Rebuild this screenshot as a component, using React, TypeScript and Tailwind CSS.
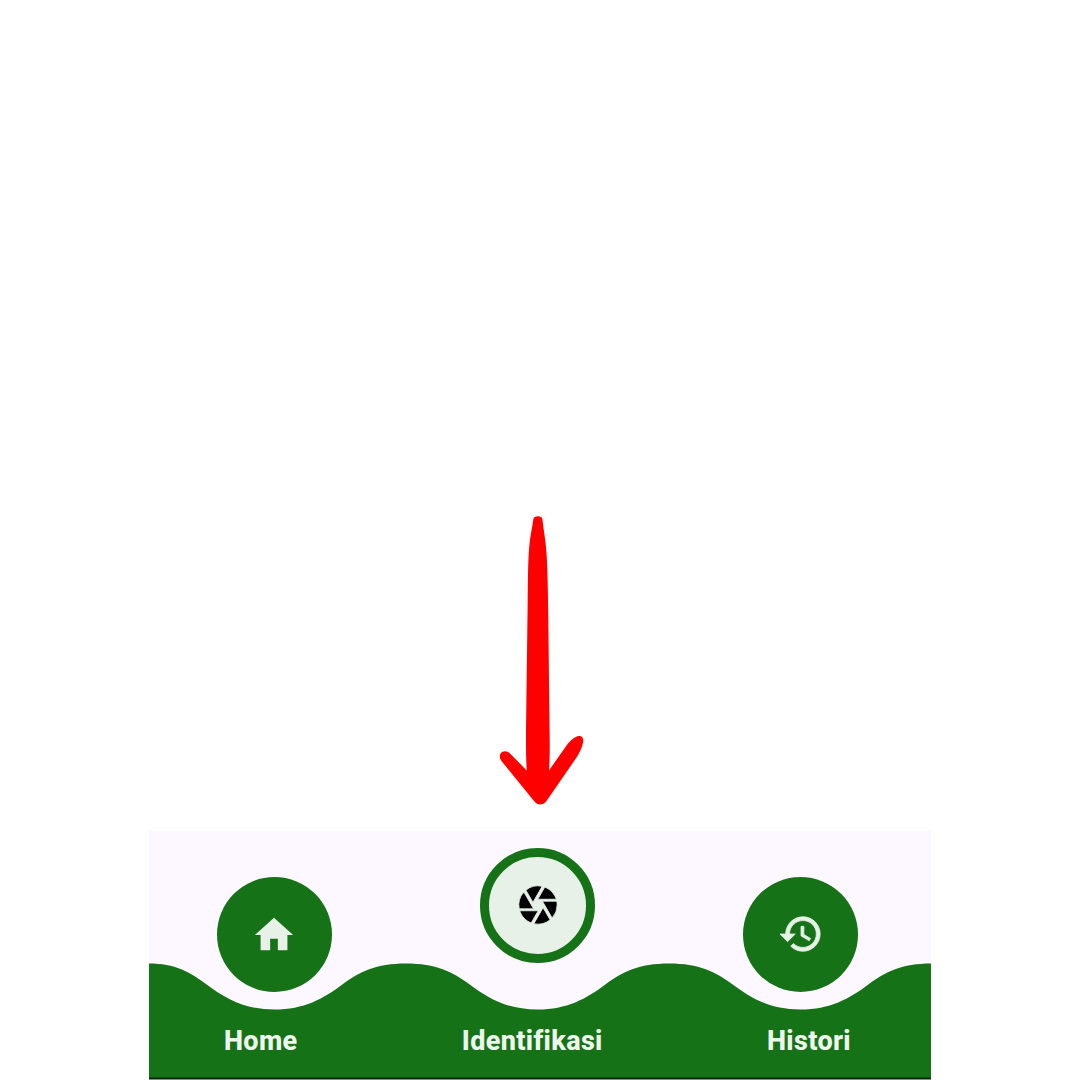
import type { ReactNode } from "react";
import { MdCamera, MdHistory, MdHome } from "react-icons/md";

function Arrow() {
  return (
    <svg
      width="84"
      height="290"
      viewBox="500 516 84 290"
      className="ml-[500px] mt-[516px] block shrink-0 fill-[#ff0000]"
      aria-hidden="true"
    >
      <path d="M538 516.2C535.3 516.2 533.8 517 533.4 519C532 529 530 537 529.2 547C528 562 528 578 527.7 600L526.4 700C526 730 525.6 752 526.7 770.5L510 753.4C507 750.2 502.5 750.8 500.6 753.6C499 756 499.5 758.5 501.5 761L534 801C537.5 805.8 543 805.8 546.5 801L576.5 757.5C580.5 751.5 583.3 744 583.3 740.5C583.2 736.5 580.5 735.2 577.5 736.3C573 738 569.5 741.5 566.5 745.5L549 770.5C550 757 549.8 742 549.5 725L548.2 610C547.9 590 547.6 570 546.5 553C545.5 539 543.6 530 542.4 519C542 517 540.5 516.2 538 516.2Z" />
    </svg>
  );
}

function Wave() {
  return (
    <svg
      width="782"
      height="249"
      viewBox="149 831 782 249"
      className="absolute inset-0"
      aria-hidden="true"
    >
      <path
        className="fill-[#167216]"
        d="M149 963.5C175 963.5 190 972 206 984C226 999 245 1009.5 274.5 1009.5C304 1009.5 323 999 343 984C359 972 376 963.5 406 963.5C436 963.5 453 972 469 984C489 999 508 1009.5 537.5 1009.5C567 1009.5 586 999 606 984C622 972 639 963.5 669 963.5C699 963.5 716 972 732 984C752 999 771 1009.5 800.5 1009.5C830 1009.5 849 999 869 984C885 972 902 963.5 931 963.5V1078H149Z"
      />
      <path className="fill-[#06280b]" d="M149 1077.5h782v2h-782z" />
    </svg>
  );
}

function NavCircle({ active = false, children }: { active?: boolean; children: ReactNode }) {
  return (
    <div
      className={
        active
          ? "flex size-[115px] items-center justify-center rounded-full border-[9px] border-[#167216] bg-[#e7f1e8] text-black"
          : "mt-[29px] flex size-[115px] items-center justify-center rounded-full bg-[#167216] text-[#e7f1e8]"
      }
    >
      {children}
    </div>
  );
}

export default function App() {
  return (
    <main className="flex h-[1080px] w-[1080px] flex-col overflow-hidden bg-white">
      <Arrow />
      <nav className="relative ml-[149px] mt-[25px] h-[249px] w-[782px] bg-[#fdf7ff] font-['Roboto',sans-serif]">
        <Wave />
        <div className="relative flex gap-[148px] pl-[68px] pt-[16.5px]">
          <NavCircle>
            <MdHome size={46} className="mr-px mt-0.5" />
          </NavCircle>
          <NavCircle active>
            <MdCamera
              size={46}
              className="[&>path:last-child]:stroke-[#e7f1e8] [&>path:last-child]:[stroke-width:0.45]"
            />
          </NavCircle>
          <NavCircle>
            <MdHistory
              size={46}
              className="[&>path:last-child]:stroke-current [&>path:last-child]:[stroke-width:0.4]"
            />
          </NavCircle>
        </div>
        <div className="relative mt-[33px] flex justify-between pl-[75px] pr-[80px] text-[27px] font-extrabold leading-[32px] tracking-[0.35px] text-[#edf5ed]">
          <span>Home</span>
          <span>Identifikasi</span>
          <span>Histori</span>
        </div>
      </nav>
    </main>
  );
}
